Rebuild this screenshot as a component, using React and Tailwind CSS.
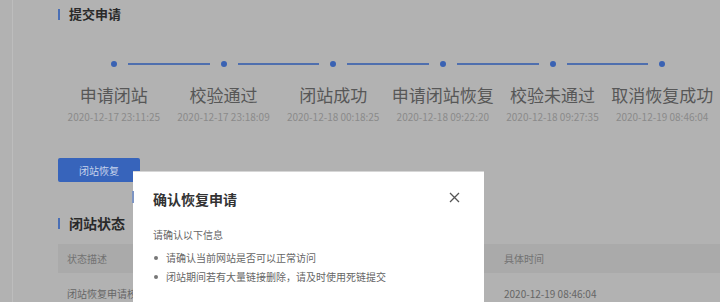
import React from "react";

const steps = [
  ["申请闭站", "2020-12-17 23:11:25"],
  ["校验通过", "2020-12-17 23:18:09"],
  ["闭站成功", "2020-12-18 00:18:25"],
  ["申请闭站恢复", "2020-12-18 09:22:20"],
  ["校验未通过", "2020-12-18 09:27:35"],
  ["取消恢复成功", "2020-12-19 08:46:04"],
];

export default function App() {
  return (
    <div
      className="relative w-[720px] h-[302px] overflow-hidden bg-[#b2b2b2] flex"
      style={{ fontFamily: '"Noto Sans CJK SC", "Microsoft YaHei", sans-serif' }}
    >
      <div className="w-[13px] shrink-0 border-r border-[#bdbdbd]" />
      <div className="flex-1 pl-[45px] pt-[4px]">
        <div className="flex items-center h-[20px]">
          <div className="w-[2px] h-[11px] bg-[#4a6fb5]" />
          <div className="ml-[9px] text-[13px] font-bold text-[#2a2a2a] leading-[20px]">提交申请</div>
        </div>
        <div className="grid grid-cols-6 w-[658px] mt-[37px] ml-[1px]">
          {steps.map(([label, time], i) => (
            <div key={i} className="flex flex-col items-center">
              <div className="flex items-center w-full h-[6px]">
                <div className={`flex-1 h-[1.5px] ${i === 0 ? "" : "bg-[#4f6fae]"}`} />
                <div className="w-[6px] h-[6px] rounded-full bg-[#3a62b3] mx-[11px]" />
                <div className={`flex-1 h-[1.5px] ${i === steps.length - 1 ? "" : "bg-[#4f6fae]"}`} />
              </div>
              <div className="mt-[16px] text-[17px] leading-[24px] text-[#575757] whitespace-nowrap">{label}</div>
              <div className="mt-[3px] text-[10px] leading-[14px] text-[#8a8a8a] whitespace-nowrap">{time}</div>
            </div>
          ))}
        </div>
        <button className="mt-[34px] w-[82px] h-[24px] rounded-[2px] bg-[#3764bb] text-[10px] text-[#c8d4ec] flex items-center justify-center">
          闭站恢复
        </button>
        <div className="flex items-center h-[20px] mt-[31px]">
          <div className="w-[2px] h-[11px] bg-[#4a6fb5]" />
          <div className="ml-[9px] text-[14px] font-bold text-[#2a2a2a] leading-[20px]">闭站状态</div>
        </div>
        <div className="mt-[11px] h-[29px] bg-[#aaaaaa] flex items-center text-[10px] text-[#727272]">
          <div className="w-[446px] pl-[9px]">状态描述</div>
          <div>具体时间</div>
        </div>
        <div className="h-[41px] flex items-center text-[10px] text-[#666666]">
          <div className="w-[446px] pl-[9px]">闭站恢复申请校验未通过</div>
          <div>2020-12-19 08:46:04</div>
        </div>
      </div>

      <div className="absolute left-[133px] top-[171px] w-[351px] h-[140px] bg-white border-t border-[#d6d6d6]">
        <div className="absolute left-[-1px] top-[19px] w-[2px] h-[12px] bg-[#7d95c4]" />
        <div className="flex items-center justify-between pl-[20px] pr-[24px] pt-[17px]">
          <div className="text-[14px] font-bold text-[#333333] leading-[20px]">确认恢复申请</div>
          <svg width="11" height="11" viewBox="0 0 11 11" className="-mt-[3px]">
            <path d="M1 1L10 10M10 1L1 10" stroke="#555555" strokeWidth="1.3" />
          </svg>
        </div>
        <div className="pl-[20px] mt-[18px] text-[10px] leading-[16px] text-[#666666]">请确认以下信息</div>
        <ul className="pl-[21px] mt-[5px] text-[10px] text-[#666666]">
          <li className="flex items-center h-[19px]">
            <span className="w-[4px] h-[4px] rounded-full bg-[#777777]" />
            <span className="ml-[8px]">请确认当前网站是否可以正常访问</span>
          </li>
          <li className="flex items-center h-[19px]">
            <span className="w-[4px] h-[4px] rounded-full bg-[#777777]" />
            <span className="ml-[8px]">闭站期间若有大量链接删除，请及时使用死链提交</span>
          </li>
        </ul>
      </div>
    </div>
  );
}
